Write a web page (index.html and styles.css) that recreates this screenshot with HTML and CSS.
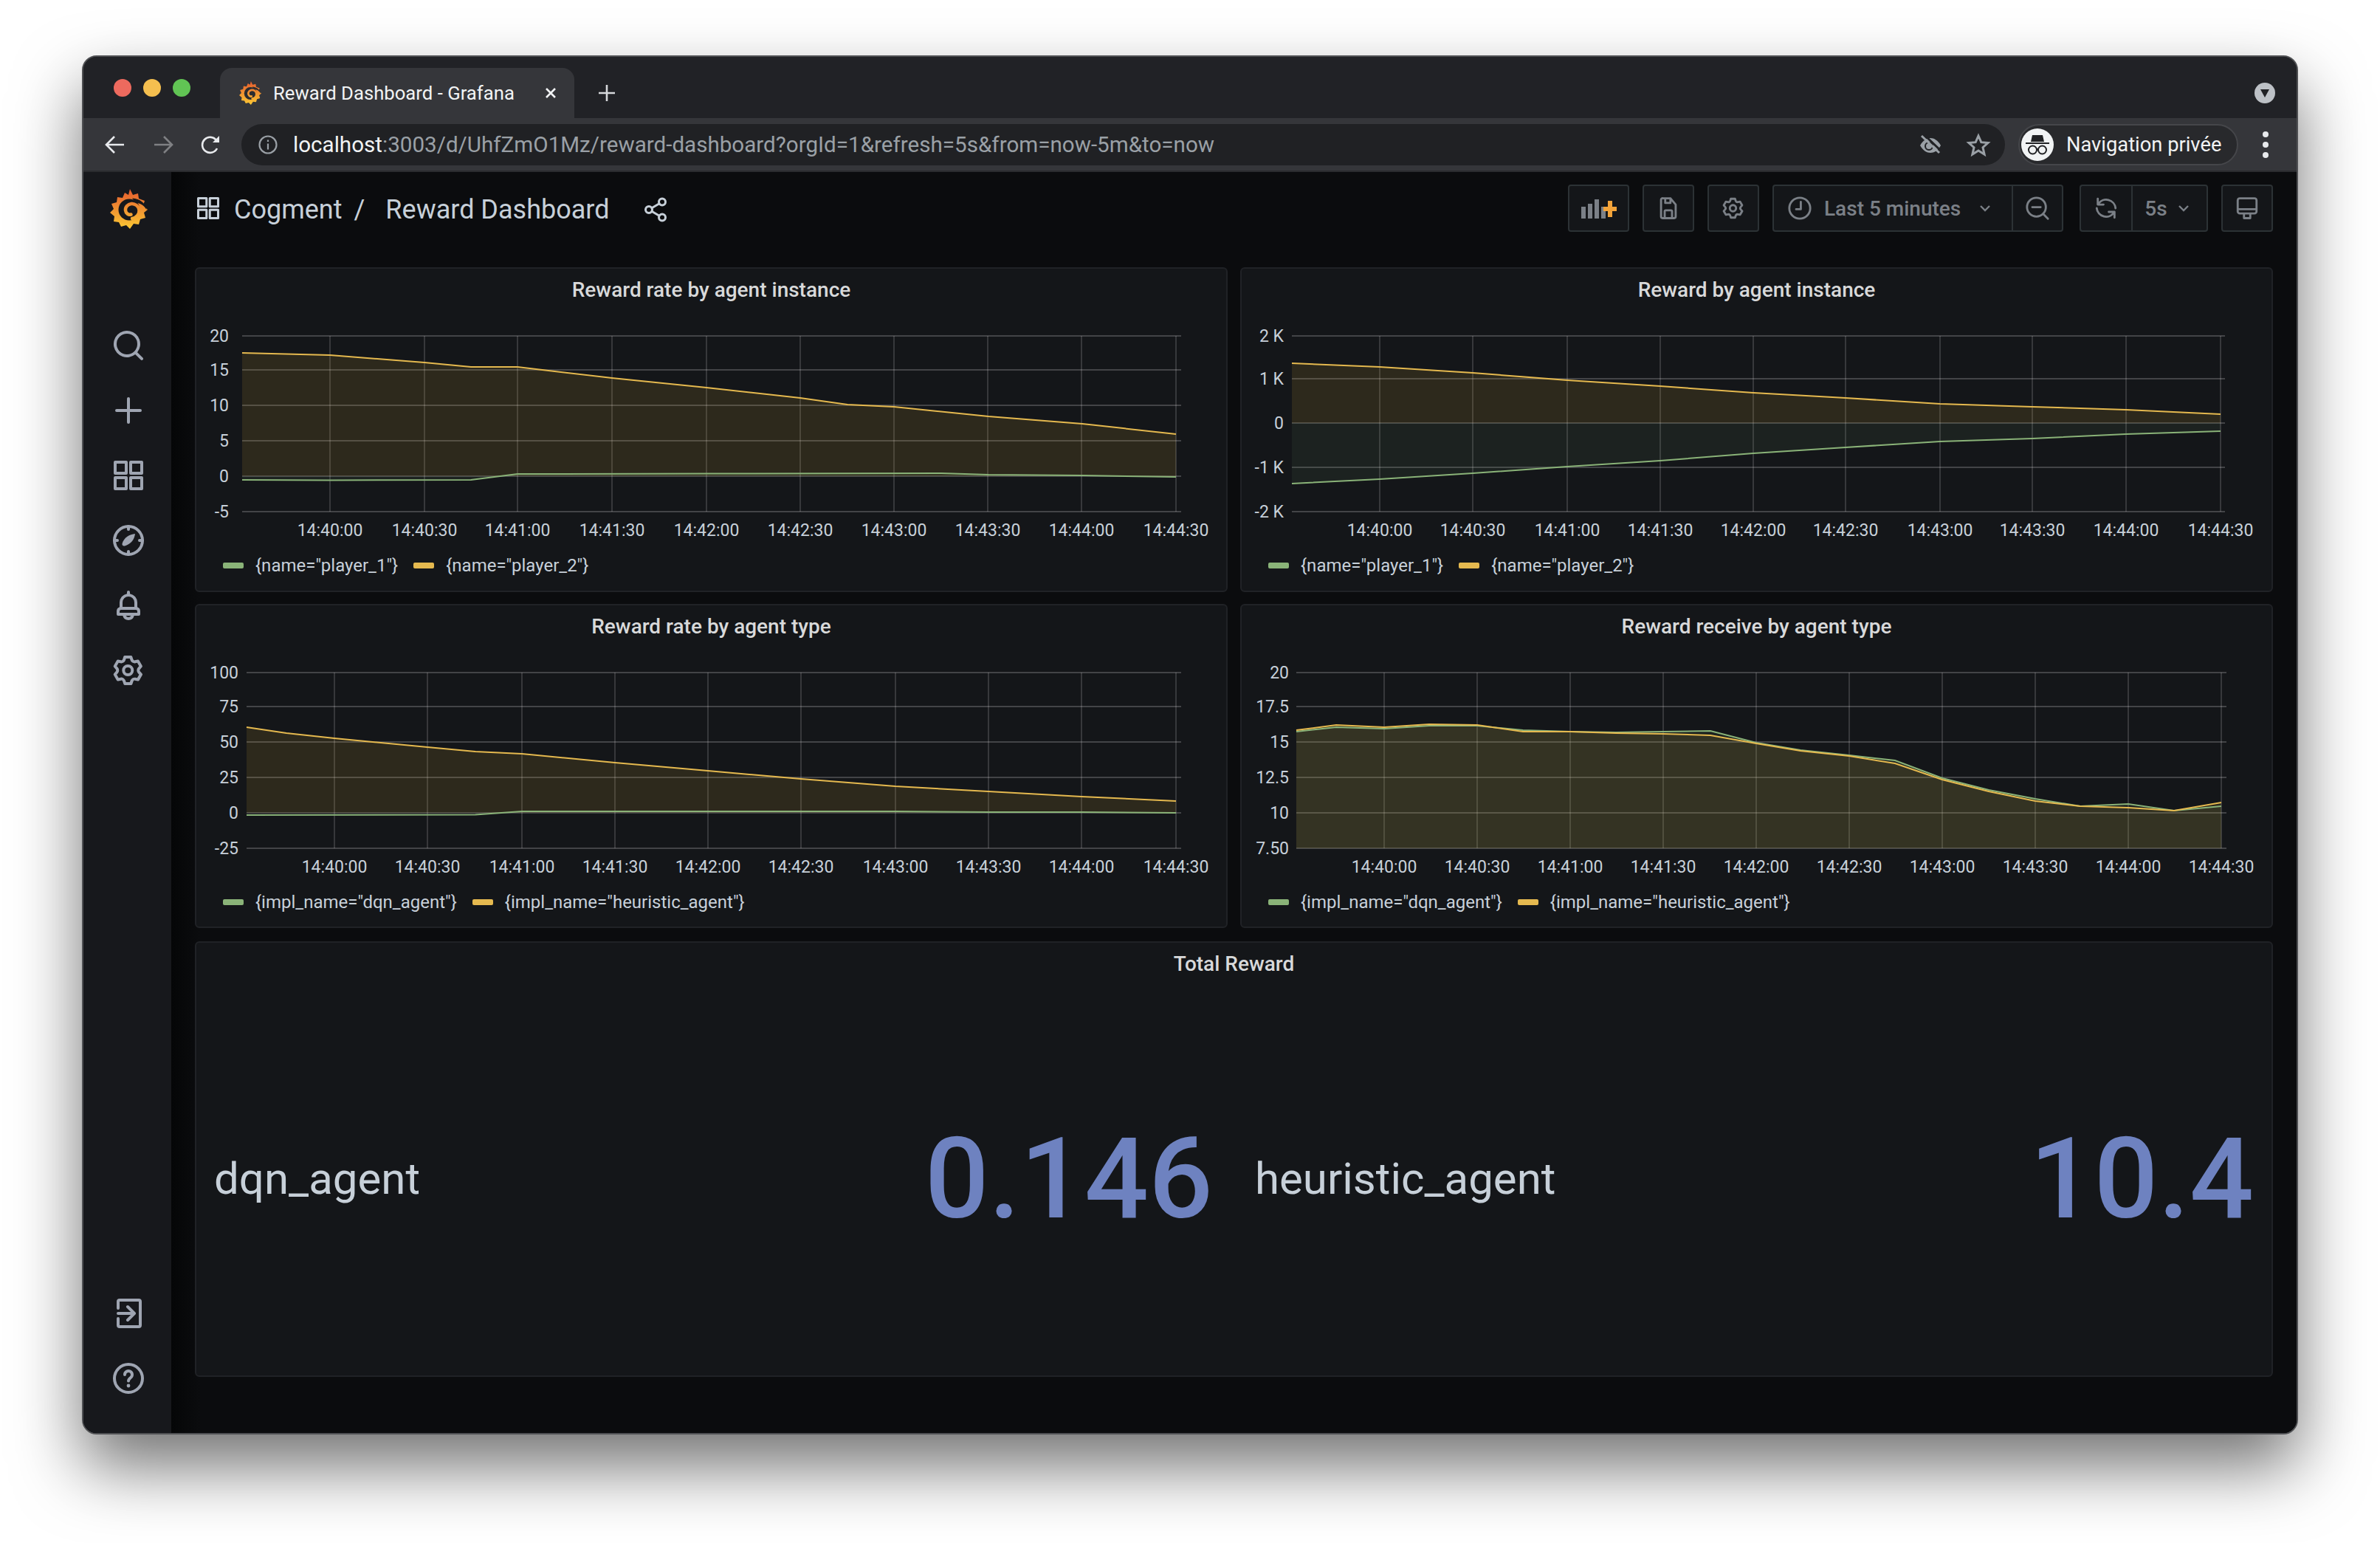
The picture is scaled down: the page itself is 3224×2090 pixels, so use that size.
FILE: index.html
```html
<!DOCTYPE html>
<html lang="en">
<head>
  <meta charset="UTF-8" />
  <title>Reward Dashboard - Grafana</title>
  <link rel="stylesheet" href="styles.css">
</head>
<body>
  <svg class="defs" width="0" height="0">
    <defs>
      <linearGradient id="logoGrad" gradientUnits="userSpaceOnUse" x1="0" y1="0" x2="0" y2="54">
        <stop offset="0" stop-color="#e55a2e" />
        <stop offset="1" stop-color="#fbc934" />
      </linearGradient>
      <symbol id="logo" viewBox="0 0 51 54">
        <path fill="url(#logoGrad)" d="M27 0l4 8 7-2 1 7 8 3-2 6 6 6-5 4 2 7-7 2-2 7-7-1-5 7-5-5-7 2-3-6-7-1 1-7-6-5 5-5-3-7 7-2 1-7 7 1 3-7 5 3z" />
        <circle fill="currentColor" cx="26" cy="28" r="14.500" />
        <path fill="currentColor" d="M30 12.500C41 13 49 20 49.500 28 46 22 41 19 35 19z" />
        <path fill="none" stroke="url(#logoGrad)" stroke-width="4.500" stroke-linecap="round" d="M30 40C36 39 40 34 39.500 28.500 39 23 33.500 19.500 29 20 24 20.500 20.500 24.500 21 29 21.500 33 25 35.500 28.500 34.500" />
      </symbol>
      <symbol id="i-search" viewBox="0 0 24 24"><path d="M21.71,20.29,18,16.61A9,9,0,1,0,16.61,18l3.68,3.68a1,1,0,0,0,1.42,0A1,1,0,0,0,21.71,20.29ZM11,18a7,7,0,1,1,7-7A7,7,0,0,1,11,18Z" /></symbol>
      <symbol id="i-bell" viewBox="0 0 24 24"><path d="M18,13.18V10a6,6,0,0,0-5-5.91V3a1,1,0,0,0-2,0V4.09A6,6,0,0,0,6,10v3.18A3,3,0,0,0,4,16v2a1,1,0,0,0,1,1H8.14a4,4,0,0,0,7.72,0H19a1,1,0,0,0,1-1V16A3,3,0,0,0,18,13.18ZM8,10a4,4,0,0,1,8,0v3H8Zm4,10a2,2,0,0,1-1.72-1h3.44A2,2,0,0,1,12,20Zm6-3H6V16a1,1,0,0,1,1-1H17a1,1,0,0,1,1,1Z" /></symbol>
      <symbol id="i-cog" viewBox="0 0 24 24"><path d="M19.9,12.66a1,1,0,0,1,0-1.32L21.18,9.9a1,1,0,0,0,.12-1.17l-2-3.46a1,1,0,0,0-1.07-.48l-1.88.38a1,1,0,0,1-1.15-.66l-.61-1.83A1,1,0,0,0,13.64,2h-4a1,1,0,0,0-1,.68L8.08,4.51a1,1,0,0,1-1.15.66L5,4.79A1,1,0,0,0,4,5.27L2,8.73A1,1,0,0,0,2.1,9.9l1.27,1.44a1,1,0,0,1,0,1.32L2.1,14.1A1,1,0,0,0,2,15.27l2,3.46a1,1,0,0,0,1.07.48l1.88-.38a1,1,0,0,1,1.15.66l.61,1.83a1,1,0,0,0,1,.68h4a1,1,0,0,0,.95-.68l.61-1.83a1,1,0,0,1,1.15-.66l1.88.38a1,1,0,0,0,1.07-.48l2-3.46a1,1,0,0,0-.12-1.17ZM18.41,14l.8.9-1.28,2.22-1.18-.24a3,3,0,0,0-3.45,2L12.92,20H10.36L10,18.86a3,3,0,0,0-3.45-2l-1.18.24L4.07,14.89l.8-.9a3,3,0,0,0,0-4l-.8-.9L5.35,6.89l1.18.24a3,3,0,0,0,3.45-2L10.36,4h2.56l.38,1.14a3,3,0,0,0,3.45,2l1.18-.24,1.28,2.22-.8.9A3,3,0,0,0,18.41,14ZM11.64,8a4,4,0,1,0,4,4A4,4,0,0,0,11.64,8Zm0,6a2,2,0,1,1,2-2A2,2,0,0,1,11.64,14Z" /></symbol>
      <symbol id="i-apps" viewBox="0 0 24 24"><path class="st" d="M3 3h7.500v7.500H3zM13.500 3H21v7.500h-7.500zM3 13.500h7.500V21H3zM13.500 13.500H21V21h-7.500z" /></symbol>
      <symbol id="i-plus" viewBox="0 0 24 24"><path class="st" d="M12 4v16M4 12h16" /></symbol>
      <symbol id="i-compass" viewBox="0 0 24 24"><circle class="st" cx="12" cy="12" r="9.500" /><path class="st" d="M12 2.500v2M12 19.500v2M2.500 12h2M19.500 12h2" /><path d="M16.500 7.500c-.4 3.500-2.600 7-7 8.200-1.200.3-2-.5-1.700-1.700C9 10 12.800 7.800 16.500 7.500z" /></symbol>
      <symbol id="i-signin" viewBox="0 0 24 24"><path class="st" d="M5 8.500V4a1 1 0 0 1 1-1h13a1 1 0 0 1 1 1v16a1 1 0 0 1-1 1H6a1 1 0 0 1-1-1v-4.500M5 12h10M11.500 7.500L16 12l-4.500 4.500" /></symbol>
      <symbol id="i-help" viewBox="0 0 24 24"><circle class="st" cx="12" cy="12" r="9.500" /><path class="st" d="M9.500 9.500a2.500 2.500 0 1 1 4 2c-1 .8-1.500 1.200-1.500 2.300" /><circle cx="12" cy="17" r="1.200" /></symbol>
      <symbol id="i-share" viewBox="0 0 24 24"><circle class="st" cx="18" cy="5" r="3" /><circle class="st" cx="6" cy="12" r="3" /><circle class="st" cx="18" cy="19" r="3" /><path class="st" d="M8.600 10.500l6.800-4M8.600 13.500l6.800 4" /></symbol>
      <symbol id="i-save" viewBox="0 0 24 24"><path class="st" d="M7 2.500h7l5 6V20a1.500 1.500 0 0 1-1.500 1.500h-11A1.500 1.500 0 0 1 5 20V4a1.500 1.500 0 0 1 2-1.500zM9 2.500V7h5V2.500M8.500 21.500V15a1 1 0 0 1 1-1h5a1 1 0 0 1 1 1v6.500" /></symbol>
      <symbol id="i-clock" viewBox="0 0 24 24"><circle class="st" cx="12" cy="12" r="10" /><path class="st" d="M13 6v7H8.500" /></symbol>
      <symbol id="i-zoom" viewBox="0 0 24 24"><circle class="st" cx="11" cy="11" r="9" /><path class="st" d="M17.500 17.500L22 22M7 11h8" /></symbol>
      <symbol id="i-sync" viewBox="0 0 24 24"><path class="st" d="M4 3v5.500h5.500M4.500 8A9 9 0 0 1 21 12M20 21v-5.500h-5.500M19.500 16A9 9 0 0 1 3 12" /></symbol>
      <symbol id="i-monitor" viewBox="0 0 24 24"><path class="st" d="M5 2.500h14a2 2 0 0 1 2 2V15a2 2 0 0 1-2 2H5a2 2 0 0 1-2-2V4.500a2 2 0 0 1 2-2zM3 13h18M9 17v4.500h6V17" /></symbol>
    </defs>
  </svg>

  <div class="window">
    <div class="tabstrip">
      <div class="traffic">
        <span class="dot red"></span>
        <span class="dot amber"></span>
        <span class="dot green"></span>
      </div>
      <div class="tab">
        <svg class="favicon"><use href="#logo" /></svg>
        <span class="tab-title">Reward Dashboard - Grafana</span>
        <svg class="tab-close" viewBox="0 0 18 18"><path d="M3 3l12 12M15 3L3 15" /></svg>
      </div>
      <svg class="tab-new" viewBox="0 0 24 24"><path d="M12 1v22M1 12h22" /></svg>
      <div class="tab-menu"><span class="tab-menu-arrow"></span></div>
    </div>

    <div class="toolbar">
      <svg class="nav-btn" viewBox="0 0 27 26"><path d="M26 13H3M13 2L2 13l11 11" /></svg>
      <svg class="nav-btn nav-off" viewBox="0 0 27 26"><path d="M1 13h23M14 2l11 11-11 11" /></svg>
      <svg class="nav-btn reload" viewBox="0 0 27 26"><path d="M22 18a10.500 10.500 0 1 1-1-11" /><path class="solid" d="M25 1v9h-9z" /></svg>
      <div class="omnibox">
        <svg class="info" viewBox="0 0 26 26"><circle cx="13" cy="13" r="11.500" /><path d="M13 11.500v8M13 6.500v2.500" /></svg>
        <span class="url"><span class="host">localhost</span>:3003/d/UhfZmO1Mz/reward-dashboard?orgId=1&amp;refresh=5s&amp;from=now-5m&amp;to=now</span>
        <svg class="omni-icon" viewBox="0 0 30 26">
          <path d="M1 14C5 7 10 4 15 4s10 3 14 10c-4 7-9 10-14 10S5 21 1 14z" />
          <circle class="iris" cx="13" cy="15" r="5" />
          <path class="gap" d="M6 -1l23 22" />
          <path class="slash" d="M3 1l24 23" />
        </svg>
        <svg class="omni-icon star" viewBox="0 0 30 28"><path d="M15 2l3.800 8.700 9.200.8-7 6.200 2.100 9.300-8.100-5-8.100 5L9 17.700 2 11.500l9.200-.8z" /></svg>
      </div>
      <div class="profile">
        <span class="avatar">
          <svg viewBox="0 0 44 44"><path class="hat" d="M15 9h14l2 9H13zM6 19h32v2H6z" /><circle cx="15.500" cy="29" r="5.500" /><circle cx="28.500" cy="29" r="5.500" /><path d="M21 28.500h2" /></svg>
        </span>
        <span class="profile-name">Navigation privée</span>
      </div>
      <div class="kebab"><span></span><span></span><span></span></div>
    </div>

    <div class="app">
      <aside class="sidebar">
        <svg class="side-logo"><use href="#logo" /></svg>
        <nav class="side-nav">
          <svg class="side-icon"><use href="#i-search" /></svg>
          <svg class="side-icon"><use href="#i-plus" /></svg>
          <svg class="side-icon"><use href="#i-apps" /></svg>
          <svg class="side-icon"><use href="#i-compass" /></svg>
          <svg class="side-icon"><use href="#i-bell" /></svg>
          <svg class="side-icon"><use href="#i-cog" /></svg>
        </nav>
        <nav class="side-bottom">
          <svg class="side-icon"><use href="#i-signin" /></svg>
          <svg class="side-icon"><use href="#i-help" /></svg>
        </nav>
      </aside>

      <main class="content">
        <header class="dash-header">
          <svg class="crumb-icon"><use href="#i-apps" /></svg>
          <span class="crumb">Cogment</span>
          <span class="crumb crumb-sep">/</span>
          <span class="crumb">Reward Dashboard</span>
          <svg class="crumb-share"><use href="#i-share" /></svg>

          <div class="actions">
            <button class="btn btn-add">
              <svg viewBox="0 0 48 28" class="add-icon">
                <path class="bars" d="M0 12h6v16H0zM9 8h6v20H9zM18 2h6v26h-6zM27 12h6v16h-6z" />
                <path class="bars-plus" d="M36 4h6v8h6v6h-6v8h-6v-8h-6v-6h6z" />
              </svg>
            </button>
            <button class="btn btn-icon"><svg class="tool-icon"><use href="#i-save" /></svg></button>
            <button class="btn btn-icon"><svg class="tool-icon"><use href="#i-cog" /></svg></button>
            <div class="btn-group group-time">
              <button class="btn btn-time">
                <svg class="tool-icon"><use href="#i-clock" /></svg>
                <span>Last 5 minutes</span>
                <svg class="chevron" viewBox="0 0 14 9"><path d="M1 1l6 6 6-6" /></svg>
              </button>
              <button class="btn btn-icon"><svg class="tool-icon"><use href="#i-zoom" /></svg></button>
            </div>
            <div class="btn-group group-refresh">
              <button class="btn btn-icon"><svg class="tool-icon"><use href="#i-sync" /></svg></button>
              <button class="btn btn-interval">
                <span>5s</span>
                <svg class="chevron" viewBox="0 0 14 9"><path d="M1 1l6 6 6-6" /></svg>
              </button>
            </div>
            <button class="btn btn-icon"><svg class="tool-icon"><use href="#i-monitor" /></svg></button>
          </div>
        </header>

        <div class="dash-grid">
          <section class="panel">
            <h2 class="panel-title">Reward rate by agent instance</h2>
            <svg class="chart" viewBox="266 424 1395 314">
              <path class="grid-h" d="M328 455H1600M328 501H1600M328 549H1600M328 597H1600M328 645H1600M328 693H1600" />
              <path class="grid-v" d="M447 455V693M575 455V693M701 455V693M829 455V693M957 455V693M1084 455V693M1211 455V693M1338 455V693M1465 455V693M1593 455V693" />
              <path class="fill-y" d="M328 478L447 481 575 491 638 497 701 497 829 512 957 525 1084 539 1148 548 1211 551 1339 564 1466 574 1593 588V645H328z" />
              <path class="fill-g" d="M328 650L447 650.500 638 650 701 642 957 641.500 1275 641 1339 643 1466 644 1593 646V645H328z" />
              <polyline class="line-y" points="328,478 447,481 575,491 638,497 701,497 829,512 957,525 1084,539 1148,548 1211,551 1339,564 1466,574 1593,588" />
              <polyline class="line-g" points="328,650 447,650.500 638,650 701,642 957,641.500 1275,641 1339,643 1466,644 1593,646" />
              <g class="tick tick-y">
                <text x="310" y="463">20</text><text x="310" y="509">15</text><text x="310" y="557">10</text><text x="310" y="605">5</text><text x="310" y="653">0</text><text x="310" y="701">-5</text>
              </g>
              <g class="tick tick-x">
                <text x="447" y="726">14:40:00</text><text x="575" y="726">14:40:30</text><text x="701" y="726">14:41:00</text><text x="829" y="726">14:41:30</text><text x="957" y="726">14:42:00</text><text x="1084" y="726">14:42:30</text><text x="1211" y="726">14:43:00</text><text x="1338" y="726">14:43:30</text><text x="1465" y="726">14:44:00</text><text x="1593" y="726">14:44:30</text>
              </g>
            </svg>
            <div class="legend">
              <span class="swatch swatch-g"></span><span class="legend-label">{name="player_1"}</span>
              <span class="swatch swatch-y"></span><span class="legend-label">{name="player_2"}</span>
            </div>
          </section>

          <section class="panel">
            <h2 class="panel-title">Reward by agent instance</h2>
            <svg class="chart" viewBox="1682 424 1395 314">
              <path class="grid-h" d="M1750 455H3014M1750 513H3014M1750 573H3014M1750 633H3014M1750 693H3014" />
              <path class="grid-v" d="M1869 455V693M1995 455V693M2123 455V693M2249 455V693M2375 455V693M2500 455V693M2628 455V693M2753 455V693M2880 455V693M3008 455V693" />
              <path class="fill-y" d="M1750 492L1869 497 1995 505 2123 515 2249 523 2375 532 2500 539 2628 547 2753 551 2880 555 3008 561V573H1750z" />
              <path class="fill-g" d="M1750 655L1869 649 1995 641 2123 632 2249 624 2375 614 2500 606 2628 598 2753 594 2880 588 3008 584V573H1750z" />
              <polyline class="line-y" points="1750,492 1869,497 1995,505 2123,515 2249,523 2375,532 2500,539 2628,547 2753,551 2880,555 3008,561" />
              <polyline class="line-g" points="1750,655 1869,649 1995,641 2123,632 2249,624 2375,614 2500,606 2628,598 2753,594 2880,588 3008,584" />
              <g class="tick tick-y">
                <text x="1739" y="463">2 K</text><text x="1739" y="521">1 K</text><text x="1739" y="581">0</text><text x="1739" y="641">-1 K</text><text x="1739" y="701">-2 K</text>
              </g>
              <g class="tick tick-x">
                <text x="1869" y="726">14:40:00</text><text x="1995" y="726">14:40:30</text><text x="2123" y="726">14:41:00</text><text x="2249" y="726">14:41:30</text><text x="2375" y="726">14:42:00</text><text x="2500" y="726">14:42:30</text><text x="2628" y="726">14:43:00</text><text x="2753" y="726">14:43:30</text><text x="2880" y="726">14:44:00</text><text x="3008" y="726">14:44:30</text>
              </g>
            </svg>
            <div class="legend">
              <span class="swatch swatch-g"></span><span class="legend-label">{name="player_1"}</span>
              <span class="swatch swatch-y"></span><span class="legend-label">{name="player_2"}</span>
            </div>
          </section>

          <section class="panel">
            <h2 class="panel-title">Reward rate by agent type</h2>
            <svg class="chart" viewBox="266 880 1395 314">
              <path class="grid-h" d="M334 911H1600M334 957H1600M334 1005H1600M334 1053H1600M334 1101H1600M334 1149H1600" />
              <path class="grid-v" d="M453 911V1149M579 911V1149M707 911V1149M833 911V1149M959 911V1149M1085 911V1149M1213 911V1149M1339 911V1149M1465 911V1149M1593 911V1149" />
              <path class="fill-y" d="M334 985L388 993 453 1000 579 1012 644 1018 707 1021 833 1033 959 1044 1085 1055 1213 1065 1339 1072 1465 1079 1593 1085V1101H334z" />
              <polyline class="line-y" points="334,985 388,993 453,1000 579,1012 644,1018 707,1021 833,1033 959,1044 1085,1055 1213,1065 1339,1072 1465,1079 1593,1085" />
              <polyline class="line-g" points="334,1104 644,1103.500 707,1099 1085,1099 1213,1099 1339,1100 1465,1100 1593,1101" />
              <g class="tick tick-y">
                <text x="323" y="919">100</text><text x="323" y="965">75</text><text x="323" y="1013">50</text><text x="323" y="1061">25</text><text x="323" y="1109">0</text><text x="323" y="1157">-25</text>
              </g>
              <g class="tick tick-x">
                <text x="453" y="1182">14:40:00</text><text x="579" y="1182">14:40:30</text><text x="707" y="1182">14:41:00</text><text x="833" y="1182">14:41:30</text><text x="959" y="1182">14:42:00</text><text x="1085" y="1182">14:42:30</text><text x="1213" y="1182">14:43:00</text><text x="1339" y="1182">14:43:30</text><text x="1465" y="1182">14:44:00</text><text x="1593" y="1182">14:44:30</text>
              </g>
            </svg>
            <div class="legend">
              <span class="swatch swatch-g"></span><span class="legend-label">{impl_name="dqn_agent"}</span>
              <span class="swatch swatch-y"></span><span class="legend-label">{impl_name="heuristic_agent"}</span>
            </div>
          </section>

          <section class="panel">
            <h2 class="panel-title">Reward receive by agent type</h2>
            <svg class="chart" viewBox="1682 880 1395 314">
              <path class="grid-h" d="M1756 911H3016M1756 957H3016M1756 1005H3016M1756 1053H3016M1756 1101H3016M1756 1149H3016" />
              <path class="grid-v" d="M1875 911V1149M2001 911V1149M2127 911V1149M2253 911V1149M2379 911V1149M2505 911V1149M2631 911V1149M2757 911V1149M2883 911V1149M3009 911V1149" />
              <path class="fill-g" d="M1756 991L1810 985 1875 987 1936 983 2001 983 2063 989 2127 991 2189 992 2253 991 2317 990 2379 1006 2439 1016 2505 1023 2567 1030 2631 1054 2694 1070 2757 1082 2818 1092 2883 1089 2945 1098 3009 1092V1149H1756z" />
              <path class="fill-y" d="M1756 989L1810 982 1875 985 1936 981 2001 982 2063 991 2127 991 2189 993 2253 994 2317 996 2379 1007 2439 1017 2505 1024 2567 1034 2631 1056 2694 1072 2757 1085 2818 1092 2883 1094 2945 1098 3009 1087V1149H1756z" />
              <polyline class="line-g" points="1756,991 1810,985 1875,987 1936,983 2001,983 2063,989 2127,991 2189,992 2253,991 2317,990 2379,1006 2439,1016 2505,1023 2567,1030 2631,1054 2694,1070 2757,1082 2818,1092 2883,1089 2945,1098 3009,1092" />
              <polyline class="line-y" points="1756,989 1810,982 1875,985 1936,981 2001,982 2063,991 2127,991 2189,993 2253,994 2317,996 2379,1007 2439,1017 2505,1024 2567,1034 2631,1056 2694,1072 2757,1085 2818,1092 2883,1094 2945,1098 3009,1087" />
              <g class="tick tick-y">
                <text x="1746" y="919">20</text><text x="1746" y="965">17.5</text><text x="1746" y="1013">15</text><text x="1746" y="1061">12.5</text><text x="1746" y="1109">10</text><text x="1746" y="1157">7.50</text>
              </g>
              <g class="tick tick-x">
                <text x="1875" y="1182">14:40:00</text><text x="2001" y="1182">14:40:30</text><text x="2127" y="1182">14:41:00</text><text x="2253" y="1182">14:41:30</text><text x="2379" y="1182">14:42:00</text><text x="2505" y="1182">14:42:30</text><text x="2631" y="1182">14:43:00</text><text x="2757" y="1182">14:43:30</text><text x="2883" y="1182">14:44:00</text><text x="3009" y="1182">14:44:30</text>
              </g>
            </svg>
            <div class="legend">
              <span class="swatch swatch-g"></span><span class="legend-label">{impl_name="dqn_agent"}</span>
              <span class="swatch swatch-y"></span><span class="legend-label">{impl_name="heuristic_agent"}</span>
            </div>
          </section>

          <section class="panel panel-wide">
            <h2 class="panel-title">Total Reward</h2>
            <div class="stats">
              <div class="stat">
                <span class="stat-name">dqn_agent</span>
                <span class="stat-value">0.146</span>
              </div>
              <div class="stat">
                <span class="stat-name">heuristic_agent</span>
                <span class="stat-value">10.4</span>
              </div>
            </div>
          </section>
        </div>
      </main>
    </div>
  </div>
</body>
</html>
```

FILE: styles.css
```css
* {
  box-sizing: border-box;
}
html, body {
  margin: 0;
  padding: 0;
  background: #fff;
}
body {
  padding: 75px 0 0 111px;
  height: 2090px;
  overflow: hidden;
  font-family: Roboto, "Liberation Sans", sans-serif;
}
.defs {
  position: absolute;
}
.st {
  fill: none;
  stroke: currentColor;
  stroke-width: 2;
  stroke-linecap: round;
  stroke-linejoin: round;
}

/* browser window */
.window {
  width: 3002px;
  height: 1868px;
  display: flex;
  flex-direction: column;
  border: 2px solid #4f5053;
  border-radius: 20px;
  overflow: hidden;
  background: #202124;
  box-shadow: 0 44px 90px rgba(0,0,0,0.55);
}
.tabstrip {
  height: 83px;
  flex: none;
  display: flex;
  align-items: flex-start;
  background: #212226;
  padding: 15px 0 0 41px;
}
.traffic {
  display: flex;
  gap: 16px;
  margin-top: 15px;
}
.dot {
  width: 24px;
  height: 24px;
  border-radius: 50%;
}
.red { background: #ed6a5e; }
.amber { background: #f5bf4f; }
.green { background: #61c454; }
.tab {
  width: 480px;
  height: 68px;
  margin-left: 40px;
  background: #35363a;
  border-radius: 16px 16px 0 0;
  display: flex;
  align-items: center;
  padding: 0 23px 0 26px;
  color: #f1f3f4;
  font-size: 25.700px;
}
.favicon {
  width: 30px;
  height: 32px;
  flex: none;
  color: #2b2c30;
}
.tab-title {
  margin-left: 16px;
  white-space: nowrap;
}
.tab-close {
  width: 18px;
  height: 18px;
  margin-left: auto;
  fill: none;
  stroke: #f1f3f4;
  stroke-width: 2.600;
}
.tab-new {
  width: 24px;
  height: 24px;
  margin: 22px 0 0 32px;
  fill: none;
  stroke: #d6d8db;
  stroke-width: 2.600;
}
.tab-menu {
  width: 28px;
  height: 28px;
  margin: 20px 29px 0 auto;
  background: #bdc1c6;
  border-radius: 50%;
  display: flex;
  align-items: center;
  justify-content: center;
}
.tab-menu-arrow {
  width: 0;
  height: 0;
  border-left: 6px solid transparent;
  border-right: 6px solid transparent;
  border-top: 11px solid #202124;
}

.toolbar {
  height: 73px;
  flex: none;
  display: flex;
  align-items: center;
  background: #35363a;
  border-bottom: 2px solid #2a2b2e;
  padding: 0 0 0 29px;
}
.nav-btn {
  width: 27px;
  height: 26px;
  margin-right: 39px;
  fill: none;
  stroke: #e8eaed;
  stroke-width: 2.600;
  flex: none;
}
.nav-off {
  margin-right: 37px;
  stroke: #7f8083;
}
.reload {
  margin-right: 28px;
}
.solid {
  fill: #e8eaed;
  stroke: none;
}
.omnibox {
  width: 2389px;
  height: 56px;
  flex: none;
  display: flex;
  align-items: center;
  background: #202124;
  border-radius: 28px;
  padding: 0 21px 0 23px;
}
.info {
  width: 26px;
  height: 26px;
  flex: none;
  fill: none;
  stroke: #9aa0a6;
  stroke-width: 2.200;
}
.url {
  margin-left: 21px;
  font-size: 29.600px;
  color: #9aa0a6;
  white-space: nowrap;
}
.host {
  color: #f1f3f4;
}
.omni-icon {
  width: 30px;
  height: 26px;
  flex: none;
  margin-left: auto;
  fill: #9aa0a6;
  stroke: none;
  overflow: visible;
}
.omni-icon .iris {
  fill: none;
  stroke: #202124;
  stroke-width: 2;
}
.omni-icon .gap {
  fill: none;
  stroke: #202124;
  stroke-width: 3;
}
.omni-icon .slash {
  fill: none;
  stroke: #9aa0a6;
  stroke-width: 3;
}
.omni-icon.star {
  width: 30px;
  height: 28px;
  margin-left: 35px;
  fill: none;
  stroke: #9aa0a6;
  stroke-width: 3;
}
.profile {
  width: 298px;
  height: 56px;
  margin-left: 18px;
  flex: none;
  display: flex;
  align-items: center;
  padding-left: 2px;
  background: #28292c;
  border: 2px solid #45464a;
  border-radius: 28px;
}
.avatar {
  width: 44px;
  height: 44px;
  border-radius: 50%;
  background: #f1f3f4;
  flex: none;
}
.avatar svg {
  display: block;
  fill: none;
  stroke: #202124;
  stroke-width: 2;
}
.avatar .hat {
  fill: #202124;
  stroke: none;
}
.profile-name {
  margin-left: 17px;
  font-size: 27.300px;
  color: #f1f3f4;
  white-space: nowrap;
}
.kebab {
  margin-left: 33px;
  display: flex;
  flex-direction: column;
  gap: 6px;
}
.kebab span {
  width: 8px;
  height: 8px;
  border-radius: 50%;
  background: #e8eaed;
}

/* grafana */
.app {
  flex: 1;
  min-height: 0;
  display: flex;
  background: #0b0c0e;
}
.sidebar {
  width: 119px;
  flex: none;
  background: #17181c;
  display: flex;
  flex-direction: column;
  align-items: center;
  color: #9fa5b2;
  padding: 23px 0 0 3px;
}
.side-logo {
  width: 51px;
  height: 54px;
  flex: none;
  color: #17181c;
}
.side-icon {
  width: 48px;
  height: 48px;
  fill: currentColor;
  flex: none;
}
.side-nav {
  display: flex;
  flex-direction: column;
  gap: 40px;
  margin-top: 134px;
}
.side-bottom {
  display: flex;
  flex-direction: column;
  gap: 40px;
  margin-top: auto;
  margin-bottom: 50px;
}
.content {
  flex: 1;
  min-width: 0;
  padding: 0 32px;
  background: linear-gradient(to right, #050607, #0b0c0e 40px);
}
.dash-header {
  height: 129px;
  display: flex;
  align-items: flex-start;
  color: #c7d0d9;
}
.crumb-icon {
  width: 36px;
  height: 36px;
  margin: 31px 0 0 0;
  flex: none;
}
.crumb {
  font-size: 36px;
  margin: 27px 0 0 17px;
  line-height: 48px;
  white-space: nowrap;
}
.crumb-sep {
  margin-left: 16px;
  margin-right: 11px;
}
.crumb-share {
  width: 36px;
  height: 36px;
  margin: 33px 0 0 45px;
}
.actions {
  margin-left: auto;
  margin-top: 17px;
  display: flex;
  gap: 18px;
  height: 64px;
  color: #7b8087;
}
.btn {
  height: 64px;
  background: #141619;
  border: 2px solid #2c3235;
  border-radius: 4px;
  color: #7b8087;
  padding: 0;
  display: flex;
  align-items: center;
  justify-content: center;
  font-family: inherit;
  font-size: 28px;
  font-weight: 500;
}
.btn-icon {
  width: 70px;
}
.btn-add {
  width: 83px;
}
.add-icon {
  width: 48px;
  height: 28px;
}
.bars {
  fill: #7b8087;
}
.bars-plus {
  fill: #f2a33a;
}
.tool-icon {
  width: 34px;
  height: 34px;
  fill: currentColor;
}
.btn-group {
  display: flex;
}
.btn-group .btn:first-child {
  border-right: none;
  border-radius: 4px 0 0 4px;
}
.btn-group .btn:last-child {
  border-radius: 0 4px 4px 0;
}
.btn-time {
  width: 324px;
  justify-content: flex-start;
  padding-left: 18px;
  gap: 16px;
}
.group-refresh {
  margin-left: 4px;
}
.btn-interval {
  width: 104px;
  gap: 15px;
  padding-right: 8px;
}
.chevron {
  width: 14px;
  height: 9px;
  fill: none;
  stroke: #7b8087;
  stroke-width: 2.400;
}
.btn-time .chevron {
  margin-left: 10px;
}
.dash-grid {
  display: grid;
  grid-template-columns: 1399px 1399px;
  grid-template-rows: 440px 439px 592px;
  column-gap: 17px;
  row-gap: 16px;
}
.panel {
  background: #141619;
  border: 2px solid #202226;
  border-radius: 6px;
  display: flex;
  flex-direction: column;
}
.panel-wide {
  grid-column: 1 / 3;
  margin-top: 2px;
}
.panel-title {
  margin: 0;
  height: 60px;
  line-height: 57px;
  text-align: center;
  font-size: 28px;
  font-weight: 500;
  color: #d8d9da;
}
.chart {
  display: block;
  width: 100%;
  height: 314px;
  flex: none;
}
.grid-h {
  fill: none;
  stroke: #fff;
  stroke-opacity: 0.2;
  stroke-width: 2;
}
.grid-v {
  fill: none;
  stroke: #fff;
  stroke-opacity: 0.2;
  stroke-width: 1.500;
}
.fill-y {
  fill: #eab839;
  fill-opacity: 0.12;
}
.fill-g {
  fill: #7eb26d;
  fill-opacity: 0.08;
}
.line-y {
  fill: none;
  stroke: #e5b94f;
  stroke-width: 2;
}
.line-g {
  fill: none;
  stroke: #8ab378;
  stroke-width: 2;
}
.tick text {
  font-size: 23px;
  fill: #c7d0d9;
}
.tick-y text {
  text-anchor: end;
}
.tick-x text {
  text-anchor: middle;
}
.legend {
  display: flex;
  align-items: center;
  height: 60px;
  padding-left: 36px;
  padding-bottom: 4px;
  font-size: 24px;
  color: #c7d0d9;
}
.swatch {
  width: 28px;
  height: 8px;
  border-radius: 2px;
  margin-right: 16px;
}
.swatch-g { background: #8ab378; }
.swatch-y { background: #e5b94f; }
.legend-label {
  margin-right: 21px;
  white-space: nowrap;
}
.stats {
  flex: 1;
  display: grid;
  grid-template-columns: 1fr 1fr;
  column-gap: 57px;
  padding: 0 24px 8px;
}
.stat {
  display: flex;
  align-items: center;
  justify-content: space-between;
}
.stat-name {
  font-size: 60px;
  color: #c7d0d9;
}
.stat-value {
  font-size: 153px;
  font-weight: 500;
  color: #6e82c0;
}
```
